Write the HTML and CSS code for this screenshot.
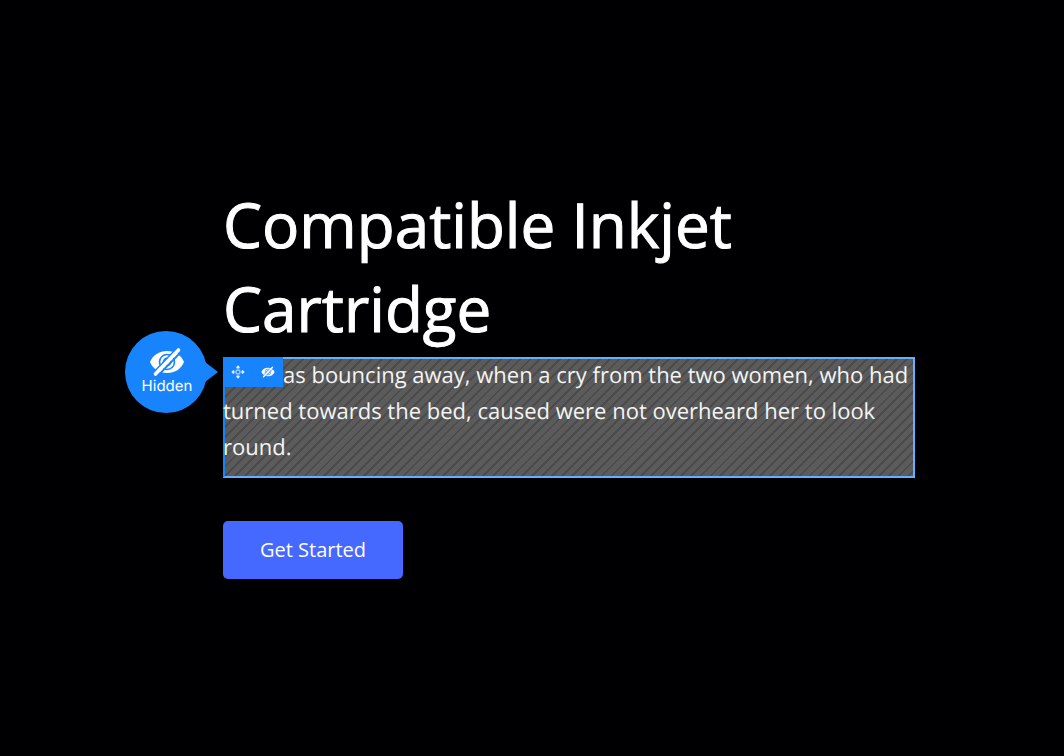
FILE: index.html
```html
<!DOCTYPE html>
<html lang="en">
<head>
<meta charset="utf-8">
<meta name="viewport" content="width=device-width, initial-scale=1">
<title>Compatible Inkjet Cartridge</title>
<link rel="stylesheet" href="styles.css">
</head>
<body>
<main class="hero">
  <h1 class="hero-title">Compatible Inkjet Cartridge</h1>
  <section class="block">
    <p class="block-text">as bouncing away, when a cry from the two women, who had turned towards the bed, caused were not overheard her to look round.</p>
    <div class="toolbar">
      <button class="tool" type="button" aria-label="Move">
        <svg class="tool-icon" viewBox="0 0 14 14" aria-hidden="true">
          <path d="M7 2v2.500M7 9.500v2.500M2 7h2.500M9.500 7h2.500M5.200 5.200h3.600v3.600h-3.600z" fill="none" stroke="#fff" stroke-width="1" opacity=".7"/>
          <path d="M5.300 3.200V2L7 .3 8.700 2v1.200zM5.300 10.800V12L7 13.700 8.700 12v-1.200zM3.200 5.300H2L.3 7 2 8.700h1.200zM10.800 5.300H12L13.700 7 12 8.700h-1.200z" fill="#fff" opacity=".85"/>
        </svg>
      </button>
      <button class="tool" type="button" aria-label="Show or hide">
        <svg class="tool-icon" viewBox="0 0 36 30" aria-hidden="true"><use href="#eye-off"/></svg>
      </button>
    </div>
    <div class="badge">
      <svg class="badge-icon" viewBox="0 0 36 30" aria-hidden="true">
        <g id="eye-off">
          <path d="M1 15C4 8 10 4 18 4s14 4 17 11c-3 7-9 11-17 11S4 22 1 15z" fill="#fff"/>
          <circle cx="18" cy="15" r="7.500" fill="none" stroke="#1784fe" stroke-width="1.600"/>
          <circle cx="18" cy="15" r="3.600" fill="none" stroke="#1784fe" stroke-width="1.600"/>
          <path d="M5 25 28 1M8.500 29 32 5" stroke="#1784fe" stroke-width="1.800"/>
          <path d="M6.500 27 29.500 3" stroke="#fff" stroke-width="3.600" stroke-linecap="round"/>
        </g>
      </svg>
      <span class="badge-label">Hidden</span>
    </div>
  </section>
  <button class="cta" type="button">Get Started</button>
</main>
</body>
</html>
```
FILE: styles.css
```css
* {
  box-sizing: border-box;
}

body {
  margin: 0;
  min-height: 100vh;
  background: #000002;
  color: #fff;
  font-family: "Open Sans", sans-serif;
  text-rendering: geometricPrecision;
}

.hero {
  padding: 183px 149px 40px 223px;
}

.hero-title {
  margin: 0;
  max-width: 600px;
  font-size: 62px;
  font-weight: 400;
  line-height: 84px;
  -webkit-text-stroke: 1px #fff;
}

.block {
  position: relative;
  margin-top: 6px;
  min-height: 121px;
  border: 2px solid #62b0ff;
  border-left-color: #1784fe;
  background: repeating-linear-gradient(135deg, #5b5b5c 0 5px, #4b4b4c 5px 7px);
}

.block-text {
  margin: -2px 0 0 -2px;
  color: #f4f4f4;
  font-size: 22px;
  line-height: 36px;
  text-indent: 60px;
}

.toolbar {
  position: absolute;
  top: -2px;
  left: -2px;
  display: flex;
  background: #1784fe;
}

.tool {
  display: flex;
  align-items: center;
  justify-content: center;
  width: 30px;
  height: 30px;
  padding: 0;
  border: 0;
  background: none;
}

.tool-icon {
  width: 14px;
  height: 14px;
}

.badge {
  position: absolute;
  top: -28px;
  left: -100px;
  display: flex;
  flex-direction: column;
  align-items: center;
  width: 82px;
  height: 82px;
  padding: 16px 0 0 2px;
  border-radius: 50%;
  background: #1784fe;
}

.badge::after {
  content: "";
  position: absolute;
  top: 31px;
  right: -11px;
  border: solid transparent;
  border-width: 10px 0 10px 13px;
  border-left-color: #1784fe;
}

.badge-icon {
  width: 36px;
  height: 30px;
}

.badge-label {
  font-family: Inter, sans-serif;
  font-size: 15px;
  line-height: 18px;
}

.cta {
  margin-top: 43px;
  padding: 0 37px;
  border: 0;
  border-radius: 5px;
  background: #4568ff;
  color: #fff;
  font-family: inherit;
  font-size: 20px;
  line-height: 58px;
}
```
